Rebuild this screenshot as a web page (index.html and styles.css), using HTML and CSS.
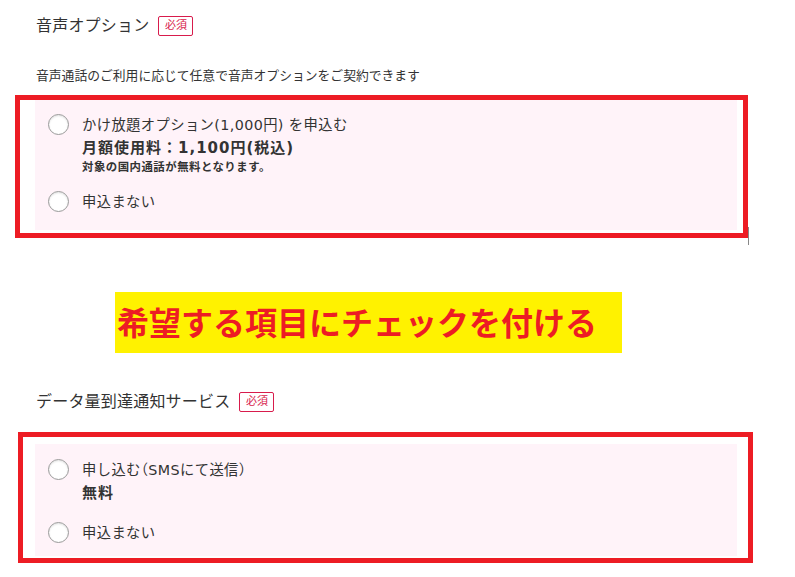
FILE: index.html
```html
<!DOCTYPE html>
<html lang="ja">
<head>
    <meta charset="UTF-8">
    <meta name="viewport" content="width=device-width, initial-scale=1.0">
    <title>オプション選択</title>
    <link rel="stylesheet" href="styles.css">
</head>
<body>
    <main class="form">
        <section class="field">
            <div class="field-head">
                <h2 class="field-title">音声オプション</h2>
                <span class="badge">必須</span>
            </div>
            <p class="field-note">音声通話のご利用に応じて任意で音声オプションをご契約できます</p>

            <div class="mark mark-voice">
                <div class="choices">
                    <label class="choice">
                        <span class="radio"></span>
                        <span class="choice-body">
                            <span class="choice-label">かけ放題オプション(1,000円) を申込む</span>
                            <strong class="price">月額使用料：1,100円(税込)</strong>
                            <small class="price-note">対象の国内通話が無料となります。</small>
                        </span>
                    </label>
                    <label class="choice">
                        <span class="radio"></span>
                        <span class="choice-body">
                            <span class="choice-label">申込まない</span>
                        </span>
                    </label>
                </div>
            </div>
        </section>

        <div class="callout">希望する項目にチェックを付ける</div>

        <section class="field field-data">
            <div class="field-head">
                <h2 class="field-title">データ量到達通知サービス</h2>
                <span class="badge">必須</span>
            </div>

            <div class="mark mark-data">
                <div class="choices">
                    <label class="choice">
                        <span class="radio"></span>
                        <span class="choice-body">
                            <span class="choice-label">申し込む（SMSにて送信）</span>
                            <strong class="price">無料</strong>
                        </span>
                    </label>
                    <label class="choice">
                        <span class="radio"></span>
                        <span class="choice-body">
                            <span class="choice-label">申込まない</span>
                        </span>
                    </label>
                </div>
            </div>
        </section>
    </main>
</body>
</html>
```

FILE: styles.css
```css
body {
    margin: 0;
    background: #fff;
    color: #333;
    font-family: "DejaVu Sans", "Noto Sans CJK JP", sans-serif;
}
.form {
    padding-top: 16px;
}
.field-head {
    display: flex;
    align-items: center;
    gap: 9px;
    height: 20px;
    margin-left: 36px;
}
.field-title {
    margin: 0;
    font-size: 16px;
    font-weight: 400;
    line-height: 20px;
    letter-spacing: 0.2px;
}
.badge {
    box-sizing: border-box;
    width: 35px;
    height: 20px;
    border: 1px solid #d81b4c;
    border-radius: 2px;
    color: #d81b4c;
    font-size: 11px;
    line-height: 18px;
    text-align: center;
}
.field-note {
    margin: 31px 0 10px 36px;
    font-size: 12.8px;
    line-height: 18px;
}

/* red annotation frames */
.mark {
    position: relative;
    border: 5px solid #ed1c24;
}
.mark-voice {
    box-sizing: border-box;
    width: 733px;
    margin-left: 15px;
    padding: 0 6px 3px 15px;
}
.mark-voice::after {
    content: "";
    position: absolute;
    right: -6px;
    bottom: -12px;
    width: 1px;
    height: 18px;
    background: #888;
}
.mark-data {
    box-sizing: border-box;
    width: 735px;
    margin: 20px 0 0 18px;
    padding: 7px 11px 2px 12px;
}

.choices {
    display: flex;
    flex-direction: column;
    gap: 17px;
    padding: 15px 13px 18px;
    background: #fff3f9;
}
.mark-data .choices {
    padding: 16px 13px 13px;
    gap: 19px;
}
.choice {
    display: flex;
    align-items: flex-start;
    gap: 13px;
    cursor: pointer;
}
.radio {
    box-sizing: border-box;
    flex: none;
    width: 21px;
    height: 21px;
    margin-top: -1px;
    border: 1px solid #9a9a9a;
    border-radius: 50%;
    background: #fff;
    box-shadow: inset 0 1px 2px rgba(0, 0, 0, 0.12);
}
.choice-body {
    display: flex;
    flex-direction: column;
}
.choice-label {
    font-size: 14.3px;
    line-height: 20px;
    letter-spacing: 0.4px;
    font-feature-settings: "halt";
}
.price {
    margin-top: 2px;
    font-size: 15px;
    line-height: 22px;
    font-weight: 700;
    letter-spacing: 1px;
}
.price-note {
    font-size: 11.4px;
    line-height: 16px;
    font-weight: 700;
    letter-spacing: 0.5px;
}

.callout {
    box-sizing: border-box;
    width: 507px;
    height: 61px;
    margin: 54px 0 39px 115px;
    padding-left: 2px;
    background: #fff200;
    color: #ed1c24;
    font-family: "Noto Sans CJK JP", sans-serif;
    font-size: 32px;
    font-weight: 700;
    line-height: 59px;
    white-space: nowrap;
}
```
